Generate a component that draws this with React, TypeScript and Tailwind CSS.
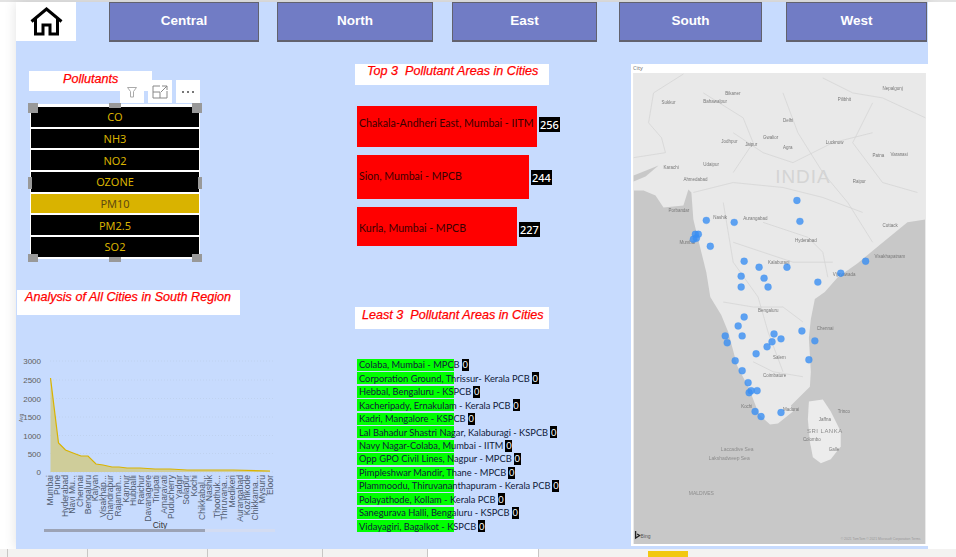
import React from "react";

const regions = [
  { name: "Central", w: "w-[150px]", ml: "ml-[33px]" },
  { name: "North", w: "w-[156px]", ml: "ml-[18px]" },
  { name: "East", w: "w-[145px]", ml: "ml-[19px]" },
  { name: "South", w: "w-[143px]", ml: "ml-[22px]" },
  { name: "West", w: "w-[141px]", ml: "ml-[24px]" },
];

const pollutants = ["CO", "NH3", "NO2", "OZONE", "PM10", "PM2.5", "SO2"];

const least = [
  "Colaba, Mumbai - MPCB",
  "Corporation Ground, Thrissur- Kerala PCB",
  "Hebbal, Bengaluru - KSPCB",
  "Kacheripady, Ernakulam - Kerala PCB",
  "Kadri, Mangalore - KSPCB",
  "Lal Bahadur Shastri Nagar, Kalaburagi - KSPCB",
  "Navy Nagar-Colaba, Mumbai - IITM",
  "Opp GPO Civil Lines, Nagpur - MPCB",
  "Pimpleshwar Mandir, Thane - MPCB",
  "Plammoodu, Thiruvananthapuram - Kerala PCB",
  "Polayathode, Kollam - Kerala PCB",
  "Sanegurava Halli, Bengaluru - KSPCB",
  "Vidayagiri, Bagalkot - KSPCB",
];

const cities = [
  "Mumbai", "Pune", "Hyderabad", "Navi Mu...", "Chennai", "Bengaluru", "Kalyan", "Visakhap...",
  "Chandrapur", "Rajamah...", "Kannur", "Hubballi", "Raichur", "Davanagere", "Tirupati", "Amaravati",
  "Puducherry", "Yadgir", "Solapur", "Kochi", "Chikkabal...", "Nashik", "Thoothuk...", "Thiruvana...",
  "Medikeri", "Aurangabad", "Kozhikode", "Chikkama...", "Mysuru", "Eloor",
];

// map dots, in map pixels
const dots = [
  [164, 128], [167, 149], [73, 148], [101, 150], [62, 162], [65, 162], [63, 166], [60, 167], [77, 174],
  [111, 189], [126, 195], [154, 195], [233, 189], [208, 201], [185, 210], [108, 204], [131, 206], [108, 215],
  [135, 215], [111, 245], [105, 254], [92, 264], [109, 264], [94, 271], [141, 262], [139, 270], [148, 267],
  [169, 259], [182, 269], [134, 275], [123, 282], [102, 289], [176, 288], [109, 299], [115, 311], [124, 319],
  [118, 319], [116, 321], [122, 340], [128, 345], [148, 341],
];

const mapLabels: [number, number, string][] = [
  [28, 31, "Sukkur"], [70, 30, "Bahawalpur"], [92, 22, "Bikaner"], [150, 49, "Delhi"], [88, 70, "Jodhpur"], [112, 73, "Jaipur"],
  [205, 28, "Pilibhit"], [250, 17, "Nepalgunj"], [150, 76, "Agra"], [193, 71, "Lucknow"], [70, 93, "Udaipur"],
  [130, 66, "Gwalior"], [30, 96, "Karachi"], [50, 108, "Ahmedabad"], [220, 110, "Raipur"], [240, 84, "Patna"],
  [80, 147, "Nashik"], [110, 148, "Aurangabad"], [46, 172, "Mumbai"], [162, 170, "Hyderabad"], [242, 186, "Visakhapatnam"],
  [135, 192, "Kalaburagi"], [200, 204, "Vijayawada"], [125, 240, "Bengaluru"], [184, 258, "Chennai"], [140, 287, "Salem"],
  [130, 305, "Coimbatore"], [108, 336, "Kochi"], [150, 339, "Madurai"], [186, 349, "Jaffna"], [205, 341, "Trinco"],
  [170, 370, "Colombo"], [196, 380, "Galle"], [258, 83, "Varanasi"], [250, 155, "Cuttack"], [35, 140, "Porbandar"],
];

function HomeIcon() {
  return (
    <svg width="33" height="29" viewBox="0 0 33 29" fill="none" stroke="#000" strokeWidth="3">
      <path d="M1.5 14.5 16.5 2l15 12.5" />
      <path d="M5.500 12v15h7.500V18h7v9h7.500V12" />
    </svg>
  );
}

function AreaChart() {
  const pts = "50.500,378 58.500,443 65.500,450 73,453 81,456 88,456 96,464 103,465 112,467 119,467 127,468 140,468 155,469 170,469 187,470 207,470 233,470 270,471";
  const ticks = [["3000", 361], ["2500", 380], ["2000", 398.5], ["1500", 417], ["1000", 435.5], ["500", 453.5], ["0", 472]] as const;
  return (
    <svg width="284" height="190" viewBox="16 350 284 190" fill="none" style={{ fontFamily: "'Liberation Sans', sans-serif" }}>
      {ticks.map(([t, y]) => (
        <g key={t}>
          <line x1="50" x2="275" y1={y} y2={y} stroke="#bfd2f0" strokeDasharray="1 2" />
          <text x="41" y={y + 3} textAnchor="end" fontSize="8" fill="#605e5c">{t}</text>
        </g>
      ))}
      <text transform="translate(23 418) rotate(-90)" textAnchor="middle" fontSize="5" fill="#605e5c">Avg</text>
      <polygon points={`${pts} 270,472 50.5,472`} fill="#cfcd9a" />
      <polyline points={pts} stroke="#d9b300" strokeWidth="1.2" />
      {cities.map((c, i) => (
        <text key={c} transform={`translate(${52.5 + i * 7.6} 475) rotate(-90)`} textAnchor="end" fontSize="8.6" fill="#4f5a6e">{c}</text>
      ))}
      <text x="160" y="528" textAnchor="middle" fontSize="8.5" fill="#333">City</text>
      <rect x="44" y="529" width="231" height="3" fill="#d3dcf2" />
      <rect x="44" y="529" width="161" height="3" fill="#9ca3b5" />
    </svg>
  );
}

function MapView() {
  return (
    <svg width="293" height="473" viewBox="0 0 293 473" className="block" style={{ fontFamily: "'Liberation Sans', sans-serif" }}>
      <rect width="293" height="473" fill="#c8c8c8" />
      <path
        d="M0 0H293V147L275 150 248 172 225 191 205 205 192 220 182 227 178 247 176 266 178 300 177 315 158 334 160 340 145 352 137 353 126 343 116 317 104 294 95 260 88 243 77 225 73 200 68 180 60 147 58 120 55 117 50 133 30 135 22 123 10 118 0 118Z"
        fill="#e9e9e9"
      />
      <path d="M0 103 25 93 12 104 0 109Z" fill="#c8c8c8" />
      <path d="M176 330 190 328 198 340 208 360 208 375 198 388 188 392 180 386 177 370 175 348Z" fill="#ececec" />
      {/* borders and rivers */}
      <g fill="none" stroke="#d2d2d2" strokeWidth="0.7" className="blur-[0.3px]">
        <path d="M50 1 20 20 15 50 28 65 32 80 0 85" />
        <path d="M190 5 220 20 250 25 293 45" />
        <path d="M60 120 100 110 150 115 190 125 230 140" />
        <path d="M100 170 130 180 160 190 200 190" />
        <path d="M90 230 120 235 150 235 170 250" />
        <path d="M120 290 140 300 170 305" />
        <path d="M100 60 130 80 160 90 200 70 240 60" />
        <path d="M70 20 110 45 120 70 100 100" />
        <path d="M150 20 165 60 190 100 215 130 240 170" />
        <path d="M240 30 220 70 250 110 285 120" />
        <path d="M90 130 100 190 125 225 135 260 150 300" />
        <path d="M130 150 175 165 190 180 195 205" />
      </g>
      <text x="170" y="110" textAnchor="middle" fontSize="19" fill="#d4d4d4" letterSpacing="1">INDIA</text>
      <g className="blur-[0.3px]">
        <text x="192" y="362" textAnchor="middle" fontSize="6" fill="#8c8c8c" letterSpacing="0.5">SRI LANKA</text>
        <text x="104" y="380" textAnchor="middle" fontSize="5" fill="#8c8c8c">Laccadive Sea</text>
        <text x="96" y="389" textAnchor="middle" fontSize="5" fill="#8c8c8c">Lakshadweep Sea</text>
        <text x="68" y="424" textAnchor="middle" fontSize="5" fill="#8c8c8c">MALDIVES</text>
        {mapLabels.map(([x, y, t]) => (
          <text key={t} x={x} y={y} fontSize="4.5" fill="#777">{t}</text>
        ))}
      </g>
      {dots.map(([x, y], i) => (
        <circle key={i} cx={x} cy={y} r="3.500" fill="#3a8ef2" fillOpacity="0.8" stroke="#3a8ef2" strokeOpacity="0.5" strokeWidth="0.5" />
      ))}
      <path d="M2 460v7l4-2.500-2.500-1.500" fill="none" stroke="#222" strokeWidth="1.3" />
      <text x="7" y="467" fontSize="5" fill="#555">Bing</text>
      <text x="288" y="469" textAnchor="end" fontSize="3.4" fill="#999">© 2021 TomTom © 2021 Microsoft Corporation Terms</text>
    </svg>
  );
}

function Handle({ className }: { className: string }) {
  return <span className={`absolute bg-[#999999] ${className}`} />;
}

function Slicer() {
  return (
    <div className="relative ml-[14px] mt-[13px] w-[170px] h-[155px] bg-white pt-[3px] px-px flex flex-col gap-[2px]">
      {pollutants.map((p) => (
        <div
          key={p}
          className={`h-[19.7px] flex items-center justify-center text-[11px] leading-none ${
            p === "PM10" ? "bg-[#d9b300] text-[#5f4a10]" : "bg-black text-[#d9b300]"
          }`}
        >
          {p}
        </div>
      ))}
      <Handle className="left-[-2px] top-[-1px] w-[10px] h-[10px]" />
      <Handle className="left-[79px] top-[-1px] w-[12px] h-[5px]" />
      <Handle className="right-[-2px] top-[-1px] w-[10px] h-[10px]" />
      <Handle className="left-[-2px] top-[73px] w-[4px] h-[12px]" />
      <Handle className="right-[-2px] top-[73px] w-[4px] h-[12px]" />
      <Handle className="left-[-2px] bottom-[-3px] w-[10px] h-[8px]" />
      <Handle className="left-[79px] bottom-[-3px] w-[12px] h-[5px]" />
      <Handle className="right-[-2px] bottom-[-3px] w-[10px] h-[8px]" />
      <div className="absolute left-[90px] top-[-24px] flex gap-1">
        <span className="w-6 h-[23px] bg-white flex items-center justify-center">
          <svg width="12" height="12" viewBox="0 0 12 12" fill="none" stroke="#aaa" strokeWidth="1">
            <path d="M1.500 1.500h9L7.500 5.500V11h-3V5.500Z" />
          </svg>
        </span>
        <span className="w-6 h-[23px] bg-white flex items-center justify-center">
          <svg width="16" height="14" viewBox="0 0 16 14" fill="none" stroke="#888" strokeWidth="1">
            <path d="M8 1H1v12h14V6M1 7h7v6M10 1h5v4M15 1 9 7" />
          </svg>
        </span>
        <span className="w-6 h-[23px] bg-white flex items-center justify-center gap-[3px]">
          <span className="w-[2px] h-[2px] bg-[#777]" />
          <span className="w-[2px] h-[2px] bg-[#777]" />
          <span className="w-[2px] h-[2px] bg-[#777]" />
        </span>
      </div>
    </div>
  );
}

function Title({ text, className }: { text: string; className: string }) {
  return (
    <div className={`bg-white text-[#ff0000] italic text-[12.6px] [-webkit-text-stroke:0.25px_#ff0000] font-['Liberation_Sans',sans-serif] ${className}`}>
      {text}
    </div>
  );
}

function Bar({ label, value, w, h, mt, shift, valueShift }: { label: string; value: number; w: string; h: string; mt: string; shift: string; valueShift: string }) {
  return (
    <div className={`flex items-center ml-[2px] ${mt}`}>
      <div className={`bg-[#ff0000] flex items-center pl-[2px] text-[10.6px] font-['Lato',sans-serif] whitespace-nowrap text-[#3a0000] ${w} ${h} ${shift}`}>{label}</div>
      <span className={`ml-[2px] bg-black text-white text-[11px] font-medium leading-[15px] px-px ${valueShift}`}>{value}</span>
    </div>
  );
}

export default function App() {
  return (
    <div className="w-[956px] h-[557px] overflow-hidden flex flex-col bg-white font-['Noto_Sans',sans-serif]">
      <div className="h-[2px] bg-[#e3e3e3]" />
      <div className="flex h-[547px]">
        <div className="w-4 bg-white" />
        <div className="w-[912px] bg-[#c7dbfe] shadow-[0_0_12px_rgba(0,0,0,0.12)] flex flex-col">
          {/* nav */}
          <div className="flex h-10 shrink-0">
            <div className="w-[60px] h-[39px] bg-white flex items-center justify-center">
              <HomeIcon />
            </div>
            {regions.map((r) => (
              <div
                key={r.name}
                className={`h-10 bg-[#717cc5] border border-[#62626e] border-b-2 flex items-center justify-center text-white text-[13.5px] font-bold font-['Liberation_Sans',sans-serif] ${r.w} ${r.ml}`}
              >
                {r.name}
              </div>
            ))}
          </div>

          <div className="flex flex-1 min-h-0">
            {/* left */}
            <div className="w-[339px] shrink-0 flex flex-col">
              <Title text="Pollutants" className="ml-[13px] mt-[29px] w-[123px] h-5 pl-[34px] leading-4" />
              <Slicer />
              <Title text="Analysis of All Cities in South Region" className="ml-px mt-[31px] w-[223px] h-[25px] pl-2 leading-[14px]" />
              <div className="mt-[35px]">
                <AreaChart />
              </div>
            </div>

            {/* middle */}
            <div className="w-[276px] shrink-0 flex flex-col">
              <Title text="Top 3  Pollutant Areas in Cities" className="mt-[22px] w-[194px] h-[21px] pl-3 leading-[15px] whitespace-pre" />
              <Bar label="Chakala-Andheri East, Mumbai - IITM" value={256} w="w-[180px]" h="h-[41px]" mt="mt-[21px]" shift="pb-[5px]" valueShift="mb-[5px]" />
              <Bar label="Sion, Mumbai - MPCB" value={244} w="w-[172px]" h="h-[44px]" mt="mt-2" shift="" valueShift="" />
              <Bar label="Kurla, Mumbai  - MPCB" value={227} w="w-[160px]" h="h-[39px]" mt="mt-2" shift="pt-[5px]" valueShift="mt-[5px]" />
              <Title text="Least 3  Pollutant Areas in Cities" className="mt-[61px] w-[194px] h-[22px] pl-[7px] leading-[16px] whitespace-pre" />
              <div className="mt-[30px] ml-[2px] flex flex-col gap-[1.450px]">
                {least.map((l) => (
                  <div key={l} className="flex items-center h-3 text-[9.3px] font-['Lato',sans-serif] leading-none whitespace-nowrap text-[#10203a]">
                    <span className="h-3 flex items-center pl-[2px] pr-px bg-[linear-gradient(#00ff00,#00ff00)] bg-no-repeat bg-[length:97px_100%]">{l}</span>
                    <span className="ml-[1px] bg-black text-white h-3 w-[7px] flex items-center justify-center">0</span>
                  </div>
                ))}
              </div>
            </div>

            {/* map */}
            <div className="w-[297px] shrink-0 mt-[22px] mb-[3px] bg-white px-[2px] pb-[2px] flex flex-col">
              <div className="h-[9px] text-[5.500px] leading-[9px] text-[#777]">City</div>
              <MapView />
            </div>
          </div>
        </div>
        <div className="flex-1 bg-white" />
      </div>

      {/* page tabs */}
      <div className="h-2 flex bg-[#f3f2f1]">
        <div className="w-[7px]" />
        {[80, 120, 115, 105].map((w, i) => (
          <div key={i} className="border-l border-[#c8c6c4]" style={{ width: w }} />
        ))}
        <div className="w-[111px] bg-white border-l border-[#c8c6c4]" />
        <div className="w-[110px] border-l border-[#c8c6c4]" />
        <div className="w-10 mt-[2px] bg-[#f2c811]" />
      </div>
    </div>
  );
}
